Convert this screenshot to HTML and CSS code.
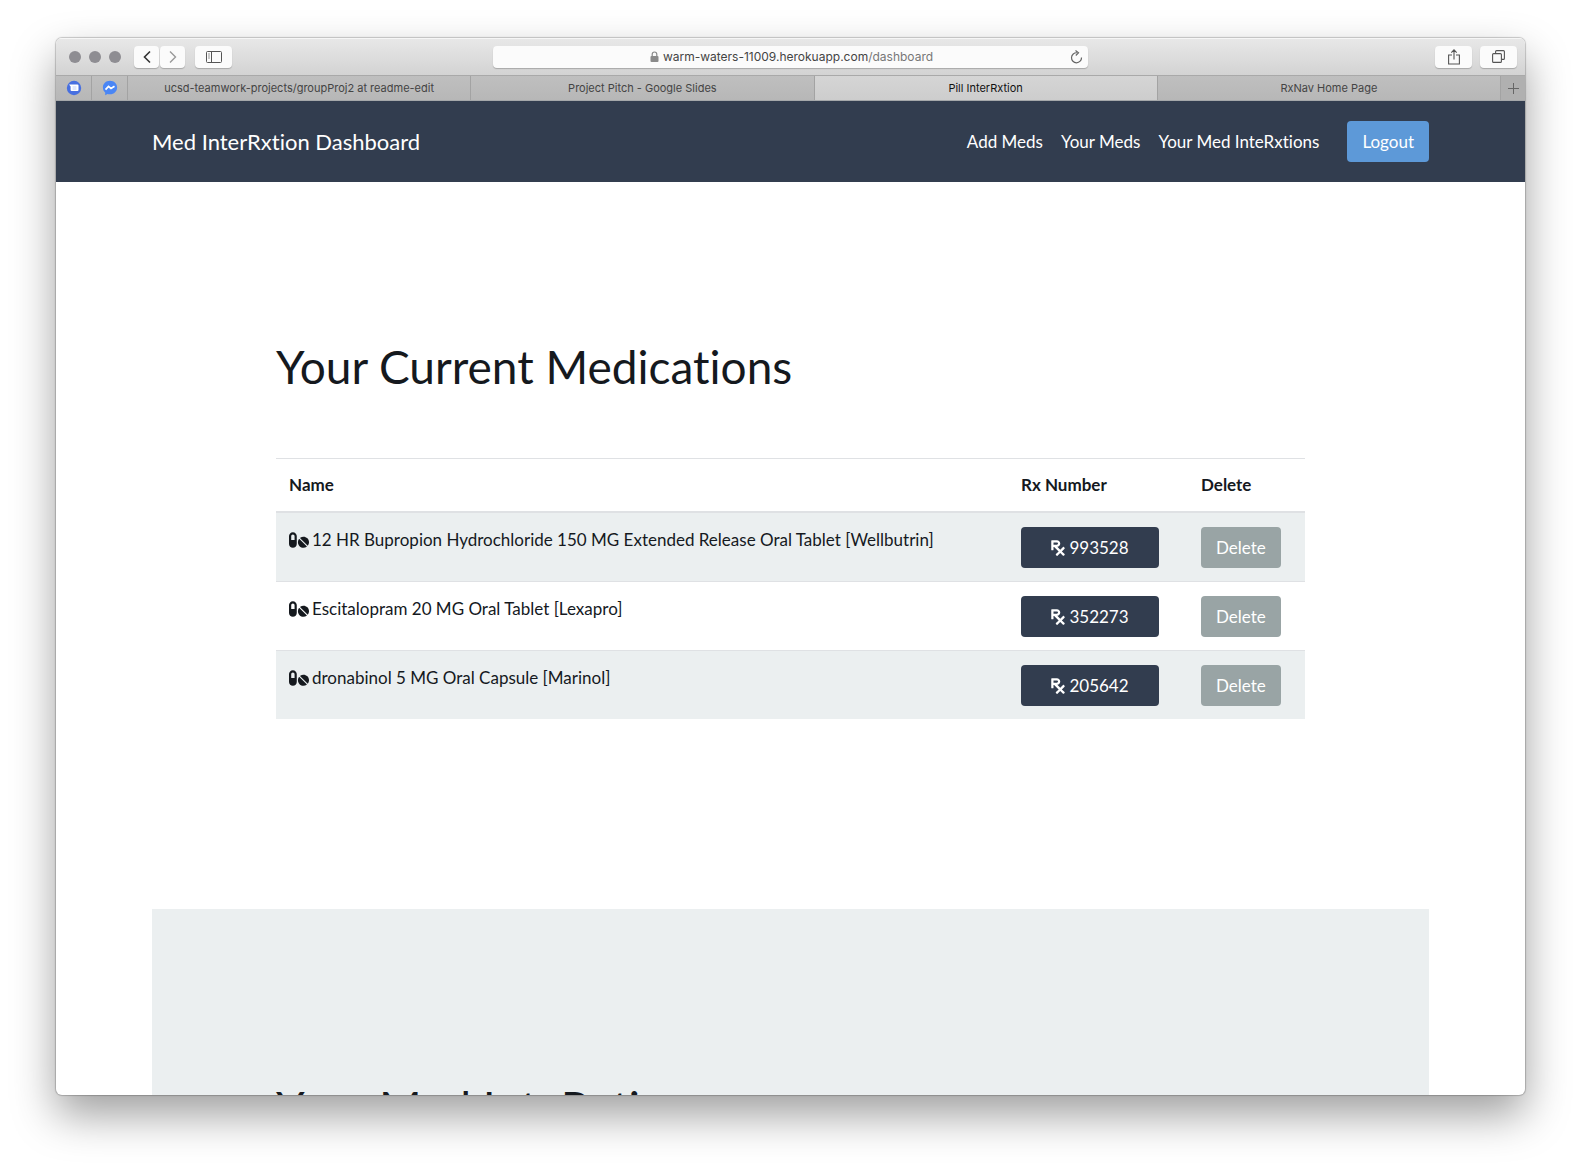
FILE: index.html
```html
<!DOCTYPE html>
<html lang="en">
<head>
<meta charset="utf-8">
<title>Pill InterRxtion</title>
<link rel="stylesheet" href="styles.css">
</head>
<body>
<svg class="sprite" aria-hidden="true">
  <symbol id="pills" viewBox="0 0 576 512"><path d="M112 32C50.1 32 0 82.1 0 144v224c0 61.9 50.1 112 112 112s112-50.1 112-112V144c0-61.9-50.1-112-112-112zm48 224H64V144c0-26.5 21.5-48 48-48s48 21.500 48 48v112zm139.700-29.700c-3.500-3.500-9.400-3.100-12.300.8-45.500 62.500-40.400 150.100 15.900 206.400 56.300 56.300 143.900 61.400 206.400 15.900 4-2.900 4.300-8.800.8-12.300L299.700 226.300zm229.800-19c-56.300-56.300-143.900-61.400-206.400-15.900-4 2.900-4.300 8.800-.8 12.300l210.800 210.800c3.500 3.500 9.400 3.100 12.300-.8 45.600-62.500 40.500-150.100-15.900-206.400z"/></symbol>
  <symbol id="rx" viewBox="0 0 384 512"><path d="M301.260 352l78.060-78.060c6.250-6.250 6.250-16.380 0-22.630l-22.630-22.630c-6.250-6.250-16.380-6.250-22.630 0L256 306.740l-83.960-83.960C219.310 216.800 256 176.890 256 128c0-53.020-42.980-96-96-96H16C7.160 32 0 39.160 0 48v256c0 8.840 7.160 16 16 16h32c8.840 0 16-7.160 16-16v-80h18.750l128 128-78.060 78.060c-6.250 6.250-6.250 16.380 0 22.630l22.630 22.630c6.250 6.250 16.380 6.250 22.630 0L256 397.250l78.060 78.060c6.250 6.250 16.380 6.250 22.630 0l22.630-22.630c6.250-6.250 6.250-16.380 0-22.630L301.260 352zM64 96h96c17.640 0 32 14.360 32 32s-14.360 32-32 32H64V96z"/></symbol>
</svg>
<div class="window">
  <div class="toolbar">
    <div class="toolbar-left">
      <div class="lights"><span></span><span></span><span></span></div>
      <div class="history">
        <button class="tool tool-small" aria-label="Back"><svg width="10" height="14" viewBox="0 0 10 14" fill="none" stroke="#333" stroke-width="1.600"><path d="M8 1.500 2.500 7 8 12.500"/></svg></button>
        <button class="tool tool-small" aria-label="Forward"><svg width="10" height="14" viewBox="0 0 10 14" fill="none" stroke="#999" stroke-width="1.400"><path d="M2 1.500 7.500 7 2 12.500"/></svg></button>
      </div>
      <button class="tool" aria-label="Show sidebar"><svg width="16" height="12" viewBox="0 0 16 12" fill="none" stroke="#555"><rect x=".5" y=".5" width="15" height="11" rx="1"/><path d="M5.500 1v10"/><path d="M2 3h2M2 5h2M2 7h2" stroke-width=".6"/></svg></button>
    </div>
    <div class="address">
      <svg width="9" height="12" viewBox="0 0 9 12"><rect x=".5" y="5" width="8" height="6" rx="1" fill="#8a8a8a"/><path d="M2.200 5V3.300a2.300 2.300 0 0 1 4.600 0V5" fill="none" stroke="#8a8a8a" stroke-width="1.200"/></svg>
      <span class="url">warm-waters-11009.herokuapp.com<span class="path">/dashboard</span></span>
      <button class="reload" aria-label="Reload"><svg width="13" height="14" viewBox="0 0 13 14" fill="none" stroke="#666" stroke-width="1.200"><path d="M7 2.800a5 5 0 1 0 4.500 4.700"/><path d="M5.500.5 8.500 2.900 5.800 5.500"/></svg></button>
    </div>
    <div class="toolbar-right">
      <button class="tool" aria-label="Share"><svg width="12" height="16" viewBox="0 0 12 16" fill="none" stroke="#555" stroke-width="1.100"><path d="M4 6H.6v9h10.800V6H8M6 10.500V1M3.300 3.600 6 .9l2.700 2.700"/></svg></button>
      <button class="tool" aria-label="Show all tabs"><svg width="13" height="13" viewBox="0 0 13 13" fill="none" stroke="#555" stroke-width="1.100"><rect x=".6" y="3.600" width="8.800" height="8.800" rx="1"/><path d="M3.600 3.400V1.600q0-1 1-1h6.800q1 0 1 1v6.800q0 1-1 1H9.600"/></svg></button>
    </div>
  </div>
  <div class="tabs">
    <a class="pin" href="#" aria-label="Messages"><svg width="16" height="16" viewBox="0 0 16 16"><circle cx="8" cy="8" r="7.200" fill="#476fe0"/><path d="M3 4.500h8.500q1 0 1 1v4.600q0 1-1 1H5.600q-1 0-1-1V6.500z" fill="#fff"/><path d="M6.500 7h4M6.500 9h4" stroke="#c3d1f8"/></svg></a>
    <a class="pin" href="#" aria-label="Messenger"><svg width="16" height="16" viewBox="0 0 16 16"><path d="M8 .8C3.900.8.900 3.700.900 7.500c0 2.100.900 3.900 2.300 5.100v2.700l2.300-1.300c.8.200 1.600.3 2.500.3 4.100 0 7.100-3 7.100-6.800S12.100.8 8 .8z" fill="#4a86f5"/><path d="m3.500 9.600 3-3.200 2.500 2 3.500-2.100" fill="none" stroke="#fff" stroke-width="1.800"/></svg></a>
    <a class="tab" href="#">ucsd-teamwork-projects/groupProj2 at readme-edit</a>
    <a class="tab" href="#">Project Pitch - Google Slides</a>
    <a class="tab tab-active" href="#">Pill InterRxtion</a>
    <a class="tab" href="#">RxNav Home Page</a>
    <button class="tab-new" aria-label="New tab"><svg width="11" height="11" viewBox="0 0 11 11" stroke="#666"><path d="M5.500 0v11M0 5.500h11"/></svg></button>
  </div>
  <nav class="navbar">
    <a class="brand" href="#">Med InterRxtion Dashboard</a>
    <div class="nav-links">
      <a href="#">Add Meds</a>
      <a href="#">Your Meds</a>
      <a href="#">Your Med InteRxtions</a>
      <button class="btn btn-info">Logout</button>
    </div>
  </nav>
  <main class="page">
    <section class="section">
      <h1>Your Current Medications</h1>
      <table>
        <thead>
          <tr><th class="col-name">Name</th><th class="col-rx">Rx Number</th><th class="col-delete">Delete</th></tr>
        </thead>
        <tbody>
          <tr>
            <td><svg class="pills"><use href="#pills"/></svg>12 HR Bupropion Hydrochloride 150 MG Extended Release Oral Tablet [Wellbutrin]</td>
            <td><button class="btn btn-rx"><svg class="rx"><use href="#rx"/></svg>993528</button></td>
            <td><button class="btn btn-delete">Delete</button></td>
          </tr>
          <tr>
            <td><svg class="pills"><use href="#pills"/></svg>Escitalopram 20 MG Oral Tablet [Lexapro]</td>
            <td><button class="btn btn-rx"><svg class="rx"><use href="#rx"/></svg>352273</button></td>
            <td><button class="btn btn-delete">Delete</button></td>
          </tr>
          <tr>
            <td><svg class="pills"><use href="#pills"/></svg>dronabinol 5 MG Oral Capsule [Marinol]</td>
            <td><button class="btn btn-rx"><svg class="rx"><use href="#rx"/></svg>205642</button></td>
            <td><button class="btn btn-delete">Delete</button></td>
          </tr>
        </tbody>
      </table>
    </section>
    <section class="section section-shaded">
      <h1>Your Med InteRxtions</h1>
    </section>
  </main>
</div>
</body>
</html>
```

FILE: styles.css
```css
* { box-sizing: border-box; }

body {
  margin: 0;
  height: 100vh;
  padding: 38px 56px 74px;
  overflow: hidden;
  background: #fff;
  color: #15191e;
  font: 17px/26px Lato, sans-serif;
  font-variant-ligatures: none;
}

a { color: inherit; text-decoration: none; }
button { border: 0; padding: 0; font: inherit; color: inherit; cursor: pointer; }
.sprite { display: none; }

.window {
  display: flex;
  flex-direction: column;
  height: 100%;
  overflow: hidden;
  border-radius: 6px;
  background: #fff;
  box-shadow: 0 0 1px 1px rgba(0, 0, 0, .2), 0 20px 44px rgba(0, 0, 0, .38);
}

/* Browser chrome */
.toolbar {
  display: flex;
  align-items: center;
  justify-content: space-between;
  flex: none;
  height: 37px;
  padding: 0 8px;
  background: linear-gradient(#e8e8e8, #d3d3d3);
  box-shadow: inset 0 1px #f6f6f6;
}
.toolbar-left, .toolbar-right { display: flex; flex: 1; align-items: center; }
.toolbar-left { gap: 10px; }
.toolbar-right { justify-content: flex-end; gap: 8px; }
.lights { display: flex; gap: 8px; margin: 0 3px 0 5px; }
.lights span { width: 12px; height: 12px; border-radius: 50%; background: #8e8d92; }
.history { display: flex; gap: 1px; }
.tool {
  display: flex;
  align-items: center;
  justify-content: center;
  width: 37px;
  height: 22px;
  border-radius: 4px;
  background: #fbfbfb;
  box-shadow: 0 1px 1px rgba(0, 0, 0, .22);
}
.tool-small { width: 25px; }
.address {
  display: flex;
  align-items: center;
  justify-content: center;
  gap: 4px;
  width: 41%;
  max-width: 595px;
  height: 22px;
  padding: 0 5px 0 24px;
  border-radius: 4px;
  background: #fbfbfb;
  box-shadow: 0 1px 1px rgba(0, 0, 0, .22);
  color: #444;
  font: 12px/24px Inter, sans-serif;
}
.address > svg { margin-left: auto; }
.path { color: #777; }
.reload { display: flex; margin-left: auto; background: none; }

.tabs {
  display: flex;
  flex: none;
  height: 26px;
  border-top: 1px solid #a9a9a9;
  border-bottom: 1px solid #a5a8aa;
  background: linear-gradient(#bfbfbf, #b7b7b7);
  color: #444;
  font: 11px/24px Inter, sans-serif;
}
.pin, .tab { border-right: 1px solid #a3a3a3; }
.pin { display: flex; align-items: center; justify-content: center; width: 36px; }
.tab { flex: 1; text-align: center; white-space: nowrap; overflow: hidden; }
.tab-active { background: linear-gradient(#d5d5d5, #cdcdcd); color: #111; }
.tab-new { display: flex; align-items: center; justify-content: center; width: 24px; background: #b0b0b0; }

/* Site */
.navbar {
  display: flex;
  align-items: center;
  justify-content: space-between;
  flex: none;
  padding: 20px 96px;
  background: #323d4f;
  color: #fff;
}
.brand { font-size: 22px; }
.nav-links { display: flex; align-items: center; gap: 18px; }
.btn {
  height: 41px;
  padding: 0 15px;
  border-radius: 4px;
  color: #fff;
  font-size: 17px;
  line-height: 41px;
}
.btn-info { margin-left: 10px; background: #5d99d8; }
.btn-rx { display: flex; align-items: center; justify-content: center; gap: 4px; width: 138px; background: #323d4f; }
.btn-delete { background: #99a4a5; }

.page { padding: 0 96px; }
.section { padding: 153px 124px 190px; }
.section-shaded { padding-top: 167px; background: #ebeff0; }
h1 { margin: 0 0 59px; font-size: 46px; font-weight: 400; line-height: 64px; }
table { width: 100%; border-collapse: collapse; table-layout: fixed; }
th, td { padding: 13px; border-top: 1px solid #dfe1e4; text-align: left; vertical-align: top; }
td { padding-top: 14px; }
thead th { border-bottom: 2px solid #dfe1e4; font-weight: 700; }
tbody tr:nth-child(odd) { background: #ebeff0; }
.col-rx { width: 180px; }
.col-delete { width: 117px; }
.pills { width: 20px; height: 18px; margin-right: 3px; vertical-align: -3px; }
.rx { width: 14px; height: 18px; }
svg { fill: currentColor; }
svg[fill="none"] { fill: none; }
```
